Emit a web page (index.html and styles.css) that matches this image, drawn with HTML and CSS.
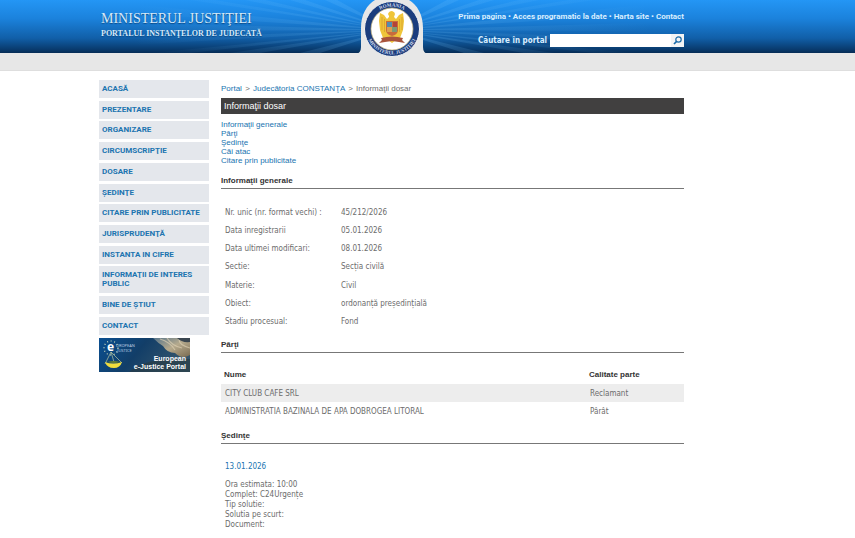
FILE: index.html
```
<!DOCTYPE html>
<html lang="ro">
<head>
<meta charset="utf-8">
<title>Informaţii dosar</title>
<link rel="stylesheet" href="styles.css">
</head>
<body>
<header class="banner">
  <svg class="rays" viewBox="0 0 855 53" preserveAspectRatio="xMidYMin slice" aria-hidden="true">
    <defs>
      <radialGradient id="fade" gradientUnits="userSpaceOnUse" cx="392" cy="30" r="260"><stop offset="0" stop-color="#7cc8ff" stop-opacity=".2"/><stop offset="1" stop-color="#7cc8ff" stop-opacity="0"/></radialGradient>
    </defs>
    <g fill="url(#fade)">
      <path d="M392 30 150 53H190ZM392 30 80 48V40ZM392 30 110 31V22ZM392 30 140 14V5ZM392 30 190 0H215ZM392 30 245 0H265ZM392 30 290 0H305ZM392 30 325 0H337ZM392 30 230 53H260ZM392 30 300 53H320Z"/>
      <path d="M392 30 634 53H594ZM392 30 704 48V40ZM392 30 674 31V22ZM392 30 644 14V5ZM392 30 594 0H569ZM392 30 539 0H519ZM392 30 494 0H479ZM392 30 459 0H447ZM392 30 554 53H524ZM392 30 484 53H464Z"/>
    </g>
  </svg>
  <div class="wrap banner-row">
    <div class="brand">
      <div class="brand-name">MINISTERUL JUSTIŢIEI</div>
      <div class="brand-sub">PORTALUL INSTANŢELOR DE JUDECATĂ</div>
    </div>
    <div class="tools">
      <nav class="top-links">
        <a href="#">Prima pagina</a><span>•</span><a href="#">Acces programatic la date</a><span>•</span><a href="#">Harta site</a><span>•</span><a href="#">Contact</a>
      </nav>
      <form class="search">
        <label for="q">Căutare în portal</label>
        <input id="q" type="text">
        <button type="button" aria-label="Caută"><svg viewBox="0 0 13 13" width="13" height="13"><circle cx="7.500" cy="5.500" r="2.700" fill="none" stroke="#1a6aa8" stroke-width="1.200"/><path d="M5.500 7.500 3 10" stroke="#1a6aa8" stroke-width="1.700"/></svg></button>
      </form>
    </div>
    <svg class="seal" viewBox="0 0 72 60" width="72" height="60" role="img" aria-label="România, Ministerul Justiției">
      <defs>
        <path id="arc-top" d="M13.500 29a22.500 22.500 0 0 1 45 0"/>
        <path id="arc-bottom" d="M9.500 28a26.500 26.500 0 0 0 53 0"/>
      </defs>
      <path d="M0 54q5-1 5-7V28C5 14 11 5 19 0H53C61 5 67 14 67 28V47q0 6 5 7v6H0Z" fill="#e7e7e7"/>
      <circle cx="36" cy="29" r="27.500" fill="#1b3d7d" stroke="#f4f4f4" stroke-width="1"/>
      <circle cx="36" cy="29" r="21" fill="#fff" stroke="#c9b780" stroke-width=".7"/>
      <g fill="#efc53a">
        <path d="M33 16 32 14q1-3 4-3 3 1 3 3l-1 3 2 2 3-4 4-2 1 8-1 9-3 8-4 2H31l-4-2-3-8-1-9 1-8 4 2 3 4 2-2Z"/>
        <path d="M30 35h12l3 6-5-1-4 3-4-3-5 1Z"/>
      </g>
      <path d="M26 17v13M28.500 19v13M43.500 19v13M46 17v13" stroke="#cf952a" stroke-width=".6"/>
      <path d="M30 21H42V31q-1 4-6 5-5-1-6-5Z" fill="#c86b3c"/>
      <path d="M31 22h5v5h-5Z" fill="#528bb0"/><path d="M36 27h5v5h-5Z" fill="#7d9a72"/><path d="M31 27h5v5h-5Z" fill="#d8a052"/><path d="M37 22h4v5h-4Z" fill="#b44437"/>
      <path d="M25 38q11-3 22 0l-1 2 3 3-6-1-7-1-7 1-6 1 3-3Z" fill="#a9543c"/>
      <g class="seal-text">
        <text><textPath href="#arc-top" startOffset="50%">ROMANIA</textPath></text>
        <text><textPath href="#arc-bottom" startOffset="50%">MINISTERUL JUSTIȚIEI</textPath></text>
      </g>
    </svg>
  </div>
</header>
<div class="strip"></div>
<div class="wrap page">
  <aside class="side">
    <nav class="menu">
      <a href="#">ACASĂ</a>
      <a href="#">PREZENTARE</a>
      <a href="#">ORGANIZARE</a>
      <a href="#">CIRCUMSCRIPŢIE</a>
      <a href="#">DOSARE</a>
      <a href="#">ŞEDINŢE</a>
      <a href="#">CITARE PRIN PUBLICITATE</a>
      <a href="#">JURISPRUDENŢĂ</a>
      <a href="#">INSTANTA IN CIFRE</a>
      <a href="#">INFORMAŢII DE INTERES PUBLIC</a>
      <a href="#">BINE DE ŞTIUT</a>
      <a href="#">CONTACT</a>
    </nav>
    <a class="ejustice" href="#">
      <svg viewBox="0 0 91 34" width="91" height="34" role="img" aria-label="European e-Justice Portal">
        <defs>
          <linearGradient id="sea" x2="1" y2=".3"><stop offset="0" stop-color="#0a4f91"/><stop offset=".5" stop-color="#123e68"/><stop offset="1" stop-color="#34556c"/></linearGradient>
          <linearGradient id="stone" x2="1" y2="1"><stop offset="0" stop-color="#56748a"/><stop offset=".5" stop-color="#b6aa8d"/><stop offset="1" stop-color="#796a50"/></linearGradient>
        </defs>
        <path d="M0 0H91V34H0Z" fill="url(#sea)"/>
        <path d="M54 0H91V17Q83 22 76 15 68 15 64 8 59 5 54 0Z" fill="url(#stone)"/>
        <path d="M61 1q10 3 15 11M68 0q5 8 15 10M80 0q-1 7 11 10" fill="none" stroke="#e0d3b5" stroke-width="1.200" opacity=".65"/>
        <path d="M78 0h13v4q-8 1-13-4Z" fill="#3a4650"/>
        <path d="M30 34Q50 18 91 21V34Z" fill="#2a3b40" opacity=".6"/>
        <circle cx="12" cy="10" r="7" fill="none" stroke="#d8e4c0" stroke-width="1.200" stroke-dasharray="1 2.600"/>
        <path d="M12 14 6 26M12 14l11 11M12 14l3 10" stroke="#b8c6a0" stroke-width=".7"/>
        <path d="M6 24q8 3 17 0-2 6-8 6-7 0-9-6Z" fill="#f1dc3d"/><path d="M8 24q7-2 13 0-6 2-13 0Z" fill="#607c35"/>
        <g class="ej-text">
          <text x="8" y="13" class="ej-e">e</text>
          <text x="17" y="9" class="ej-tiny">UROPEAN</text>
          <text x="17" y="14" class="ej-tiny">-JUSTICE</text>
          <text x="87" y="23" class="ej-name">European</text>
          <text x="87" y="31" class="ej-name">e-Justice Portal</text>
        </g>
      </svg>
    </a>
  </aside>
  <main class="content">
    <nav class="crumbs"><a href="#">Portal</a> <span>&gt;</span> <a href="#">Judecătoria CONSTANŢA</a> <span>&gt;</span> Informaţii dosar</nav>
    <h1>Informaţii dosar</h1>
    <nav class="jump">
      <a href="#general">Informaţii generale</a>
      <a href="#parti">Părţi</a>
      <a href="#sedinte">Şedinţe</a>
      <a href="#">Căi atac</a>
      <a href="#">Citare prin publicitate</a>
    </nav>
    <h2 id="general">Informaţii generale</h2>
    <dl class="facts">
      <dt>Nr. unic (nr. format vechi) :</dt><dd>45/212/2026</dd>
      <dt>Data inregistrarii</dt><dd>05.01.2026</dd>
      <dt>Data ultimei modificari:</dt><dd>08.01.2026</dd>
      <dt>Sectie:</dt><dd>Secția civilă</dd>
      <dt>Materie:</dt><dd>Civil</dd>
      <dt>Obiect:</dt><dd>ordonanță președințială</dd>
      <dt>Stadiu procesual:</dt><dd>Fond</dd>
    </dl>
    <h2 id="parti">Părţi</h2>
    <table class="parties">
      <thead><tr><th scope="col">Nume</th><th scope="col">Calitate parte</th></tr></thead>
      <tbody>
        <tr><td>CITY CLUB CAFE SRL</td><td>Reclamant</td></tr>
        <tr><td>ADMINISTRATIA BAZINALA DE APA DOBROGEA LITORAL</td><td>Pârât</td></tr>
      </tbody>
    </table>
    <h2 id="sedinte">Şedinţe</h2>
    <section class="hearing">
      <h3>13.01.2026</h3>
      <p>Ora estimata: 10:00</p>
      <p>Complet: C24Urgențe</p>
      <p>Tip solutie:</p>
      <p>Solutia pe scurt:</p>
      <p>Document:</p>
    </section>
  </main>
</div>
</body>
</html>
```
FILE: styles.css
```
* { box-sizing: border-box; }
body { margin: 0; background: #fff; color: #6c6c6c; font: 8px/9px "Liberation Sans", Arial, sans-serif; }
a { color: #2074b0; text-decoration: none; }
h1, h2, h3, p, dl, dd { margin: 0; }

.wrap { max-width: 585px; margin-left: 99px; }

.banner { position: relative; height: 53px; background: linear-gradient(#2496f5 0%, #1b82dc 35%, #115fa8 72%, #093b6e 93%, #062c55 100%); }
.rays { position: absolute; inset: 0; width: 100%; height: 100%; }
.banner-row { position: relative; display: flex; justify-content: space-between; }
.brand { padding: 11px 0 0 2px; color: #d6e9f8; font-family: "Liberation Serif", "Times New Roman", serif; text-shadow: 0 1px 1px #0c4a86; }
.brand-name { font-size: 14px; line-height: 16px; }
.brand-sub { font-size: 8px; line-height: 14px; font-weight: bold; }
.tools { display: flex; flex-direction: column; align-items: flex-end; padding-top: 12px; color: #d9eeff; }
.top-links { display: flex; gap: 2px; font: bold 8px/10px Roboto, sans-serif; }
.top-links a { color: #d9eeff; }
.search { display: flex; align-items: center; margin-top: 12px; }
.search label { margin-right: 3px; font: bold 8px/10px "DejaVu Sans Condensed", "DejaVu Sans", sans-serif; }
.search input { width: 121px; height: 13px; padding: 0 2px; border: 0; background: #fff; font-size: 8px; }
.search button { display: flex; width: 13px; height: 13px; padding: 0; border: 0; background: #f4f4f4; }
.seal { position: absolute; z-index: 1; left: 257px; top: 0; }
.seal-text { fill: #d5dced; font: bold 5px "Liberation Serif", serif; text-anchor: middle; }
.strip { height: 18px; background: #e7e7e7; border-bottom: 1px solid #dedede; }

.page { display: flex; gap: 12px; padding-top: 9px; }
.side { flex: 0 0 110px; }
.menu { display: flex; flex-direction: column; justify-content: space-between; min-height: 255px; }
.menu a { padding: 4px 3px 5px; background: #e4e7ec; font-family: Roboto, sans-serif; font-weight: bold; }
.ejustice { display: block; margin-top: 3px; }
.ejustice svg { display: block; }
.ej-text { fill: #fff; font-family: "Noto Sans", sans-serif; }
.ej-e { font-size: 12px; font-weight: bold; }
.ej-tiny { font-size: 4px; fill: #b9cde0; }
.ej-name { font-family: "Liberation Sans", sans-serif; font-size: 7px; font-weight: bold; text-anchor: end; }

.content { flex: 1; padding-top: 4px; }
.crumbs span { margin: 0 1px; }
h1 { margin: 5px 0 6px; padding: 0 3px; background: #414040; color: #fff; font-size: 9px; line-height: 16px; font-weight: normal; }
.jump { display: flex; flex-direction: column; align-items: flex-start; }
h2 { padding-bottom: 2px; border-bottom: 1px solid #777; color: #333; font-size: 8px; line-height: 10px; }
.jump + h2 { margin-top: 11px; }
.facts { display: grid; grid-template-columns: 116px 1fr; grid-auto-rows: 1fr; align-items: center; height: 128px; margin: 14px 4px 9px; }
.facts, .parties td, .hearing { font-family: "DejaVu Sans Condensed", "DejaVu Sans", sans-serif; }
.parties { width: 100%; margin: 12px 0 11px; border-collapse: collapse; }
.parties th { height: 19px; padding: 0 3px; color: #333; text-align: left; }
.parties td { height: 18px; padding: 1px 4px 0; }
.parties th:first-child { width: 365px; }
.parties tbody tr:nth-child(odd) { background: #ededed; }
.hearing { padding: 18px 4px 8px; line-height: 10px; }
.hearing h3 { margin-bottom: 8px; color: #2074b0; font-size: 8px; font-weight: normal; }
```
